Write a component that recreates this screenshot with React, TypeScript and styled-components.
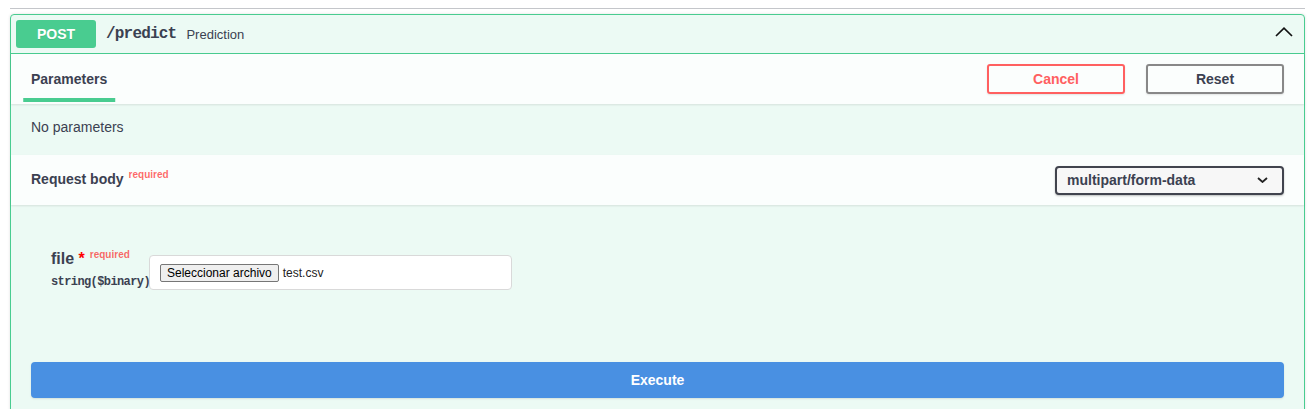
import React from "react";
import styled, { createGlobalStyle } from "styled-components";

const Global = createGlobalStyle`
  html, body { margin: 0; padding: 0; background: #fff; }
  body {
    font-family: "Liberation Sans", Arial, sans-serif;
    color: #3b4151;
  }
  * { box-sizing: border-box; }
`;

const Page = styled.div`
  padding: 8px 3px 0 10px;
  width: 1308px;
`;

const TagLine = styled.div`
  border-top: 1px solid rgba(59, 65, 81, 0.3);
`;

const Opblock = styled.div`
  margin-top: 5px;
  border: 1px solid #49cc90;
  border-radius: 4px;
  background: rgba(73, 204, 144, 0.1);
  box-shadow: 0 0 3px rgba(0, 0, 0, 0.12);
  height: 420px;
`;

const Summary = styled.div`
  display: flex;
  align-items: center;
  padding: 5px;
  border-bottom: 1px solid #49cc90;
`;

const Method = styled.span`
  min-width: 80px;
  padding: 6px 0;
  font-size: 14px;
  line-height: 16px;
  font-weight: 700;
  text-align: center;
  color: #fff;
  background: #49cc90;
  border-radius: 3px;
  text-shadow: 0 1px 0 rgba(0, 0, 0, 0.1);
`;

const Path = styled.span`
  padding: 0 10px;
  font-family: "Liberation Mono", "DejaVu Sans Mono", monospace;
  font-size: 16px;
  font-weight: 700;
  letter-spacing: -0.8px;
  color: #3b4151;
`;

const Desc = styled.span`
  flex: 1;
  font-size: 13px;
  color: #3b4151;
`;

const Arrow = styled.svg`
  margin-right: 6px;
  margin-bottom: 4px;
`;

const SectionHeader = styled.div`
  display: flex;
  align-items: center;
  justify-content: space-between;
  padding: 8px 20px;
  min-height: 50px;
  background: rgba(255, 255, 255, 0.8);
  box-shadow: 0 1px 2px rgba(0, 0, 0, 0.1);
`;

const TabTitle = styled.h4`
  position: relative;
  margin: 0;
  font-size: 14px;
  line-height: 16px;
  font-weight: 700;
  color: #3b4151;
  &::after {
    content: "";
    position: absolute;
    left: 50%;
    bottom: -15px;
    width: 120%;
    height: 4px;
    transform: translateX(-50%);
    background: #49cc90;
  }
`;

const BtnGroup = styled.div`
  display: flex;
  gap: 21px;
`;

const OutlineBtn = styled.button<{ $tone: "danger" | "neutral" }>`
  width: 138px;
  height: 30px;
  padding: 0;
  font-family: "Liberation Sans", Arial, sans-serif;
  font-size: 14px;
  font-weight: 700;
  background: transparent;
  border: 2px solid ${(p) => (p.$tone === "danger" ? "#ff6060" : "#888")};
  color: ${(p) => (p.$tone === "danger" ? "#ff6060" : "#3b4151")};
  border-radius: 3px;
  box-shadow: 0 1px 2px rgba(0, 0, 0, 0.1);
`;

const Description = styled.div`
  padding: 15px 20px 19px;
  font-size: 14px;
  line-height: 17px;
  color: #3b4151;
`;

const HeaderTitle = styled.h4`
  margin: 0;
  font-size: 14px;
  line-height: 16px;
  font-weight: 700;
  color: #3b4151;
`;

const Required = styled.span`
  position: relative;
  top: -6px;
  padding: 5px;
  font-size: 10px;
  font-weight: 700;
  color: rgba(255, 0, 0, 0.6);
`;

const Select = styled.div`
  width: 229px;
  height: 29px;
  display: flex;
  align-items: center;
  justify-content: space-between;
  padding: 0 14px 0 10px;
  border: 2px solid #41444e;
  border-radius: 4px;
  background: #f7f7f7;
  box-shadow: 0 1px 2px 0 rgba(0, 0, 0, 0.25);
  font-size: 14px;
  font-weight: 700;
  color: #3b4151;
`;

const Body = styled.div`
  padding: 45px 0 0 40px;
`;

const ParamRow = styled.div`
  display: flex;
  align-items: flex-start;
`;

const NameCol = styled.div`
  width: 98px;
`;

const ParamName = styled.div`
  font-size: 16px;
  line-height: 18px;
  font-weight: 700;
  color: #3b4151;
`;

const Star = styled.span`
  color: red;
`;

const ParamType = styled.div`
  padding-top: 5px;
  font-family: "Liberation Mono", "DejaVu Sans Mono", monospace;
  font-size: 12px;
  line-height: 14px;
  font-weight: 700;
  letter-spacing: -0.6px;
  color: #3b4151;
`;

const FileBox = styled.div`
  width: 363px;
  height: 35px;
  margin-top: 5px;
  display: flex;
  align-items: center;
  padding: 0 10px;
  border: 1px solid #d9d9d9;
  border-radius: 4px;
  background: #fff;
`;

const FileButton = styled.button`
  height: 18px;
  padding: 0 6px;
  font-family: "Liberation Sans", Arial, sans-serif;
  font-size: 12px;
  line-height: 14px;
  color: #000;
  background: #efefef;
  border: 1px solid #767676;
  border-radius: 2px;
`;

const FileName = styled.span`
  margin-left: 4px;
  font-size: 12px;
  color: #222;
`;

const ExecuteWrapper = styled.div`
  margin-top: 52px;
  padding: 20px;
`;

const ExecuteBtn = styled.button`
  width: 100%;
  height: 36px;
  padding: 0;
  font-family: "Liberation Sans", Arial, sans-serif;
  font-size: 14px;
  font-weight: 700;
  color: #fff;
  background: #4990e2;
  border: 2px solid #4990e2;
  border-radius: 4px;
  box-shadow: 0 1px 2px rgba(0, 0, 0, 0.1);
`;

export default function App() {
  return (
    <Page>
      <Global />
      <TagLine />
      <Opblock>
        <Summary>
          <Method>POST</Method>
          <Path>/predict</Path>
          <Desc>Prediction</Desc>
          <Arrow width="18" height="10" viewBox="0 0 18 10">
            <polyline points="1,9 9,1.2 17,9" fill="none" stroke="#111" strokeWidth="1.7" />
          </Arrow>
        </Summary>
        <SectionHeader>
          <TabTitle>Parameters</TabTitle>
          <BtnGroup>
            <OutlineBtn $tone="danger">Cancel</OutlineBtn>
            <OutlineBtn $tone="neutral">Reset</OutlineBtn>
          </BtnGroup>
        </SectionHeader>
        <Description>No parameters</Description>
        <SectionHeader>
          <HeaderTitle>
            Request body<Required>required</Required>
          </HeaderTitle>
          <Select>
            <span>multipart/form-data</span>
            <svg width="11" height="6" viewBox="0 0 11 6">
              <polyline points="1,1 5.5,5 10,1" fill="none" stroke="#222" strokeWidth="1.8" />
            </svg>
          </Select>
        </SectionHeader>
        <Body>
          <ParamRow>
            <NameCol>
              <ParamName>
                file<Star>&nbsp;*</Star>
                <Required>required</Required>
              </ParamName>
              <ParamType>string($binary)</ParamType>
            </NameCol>
            <FileBox>
              <FileButton>Seleccionar archivo</FileButton>
              <FileName>test.csv</FileName>
            </FileBox>
          </ParamRow>
        </Body>
        <ExecuteWrapper>
          <ExecuteBtn>Execute</ExecuteBtn>
        </ExecuteWrapper>
      </Opblock>
    </Page>
  );
}
